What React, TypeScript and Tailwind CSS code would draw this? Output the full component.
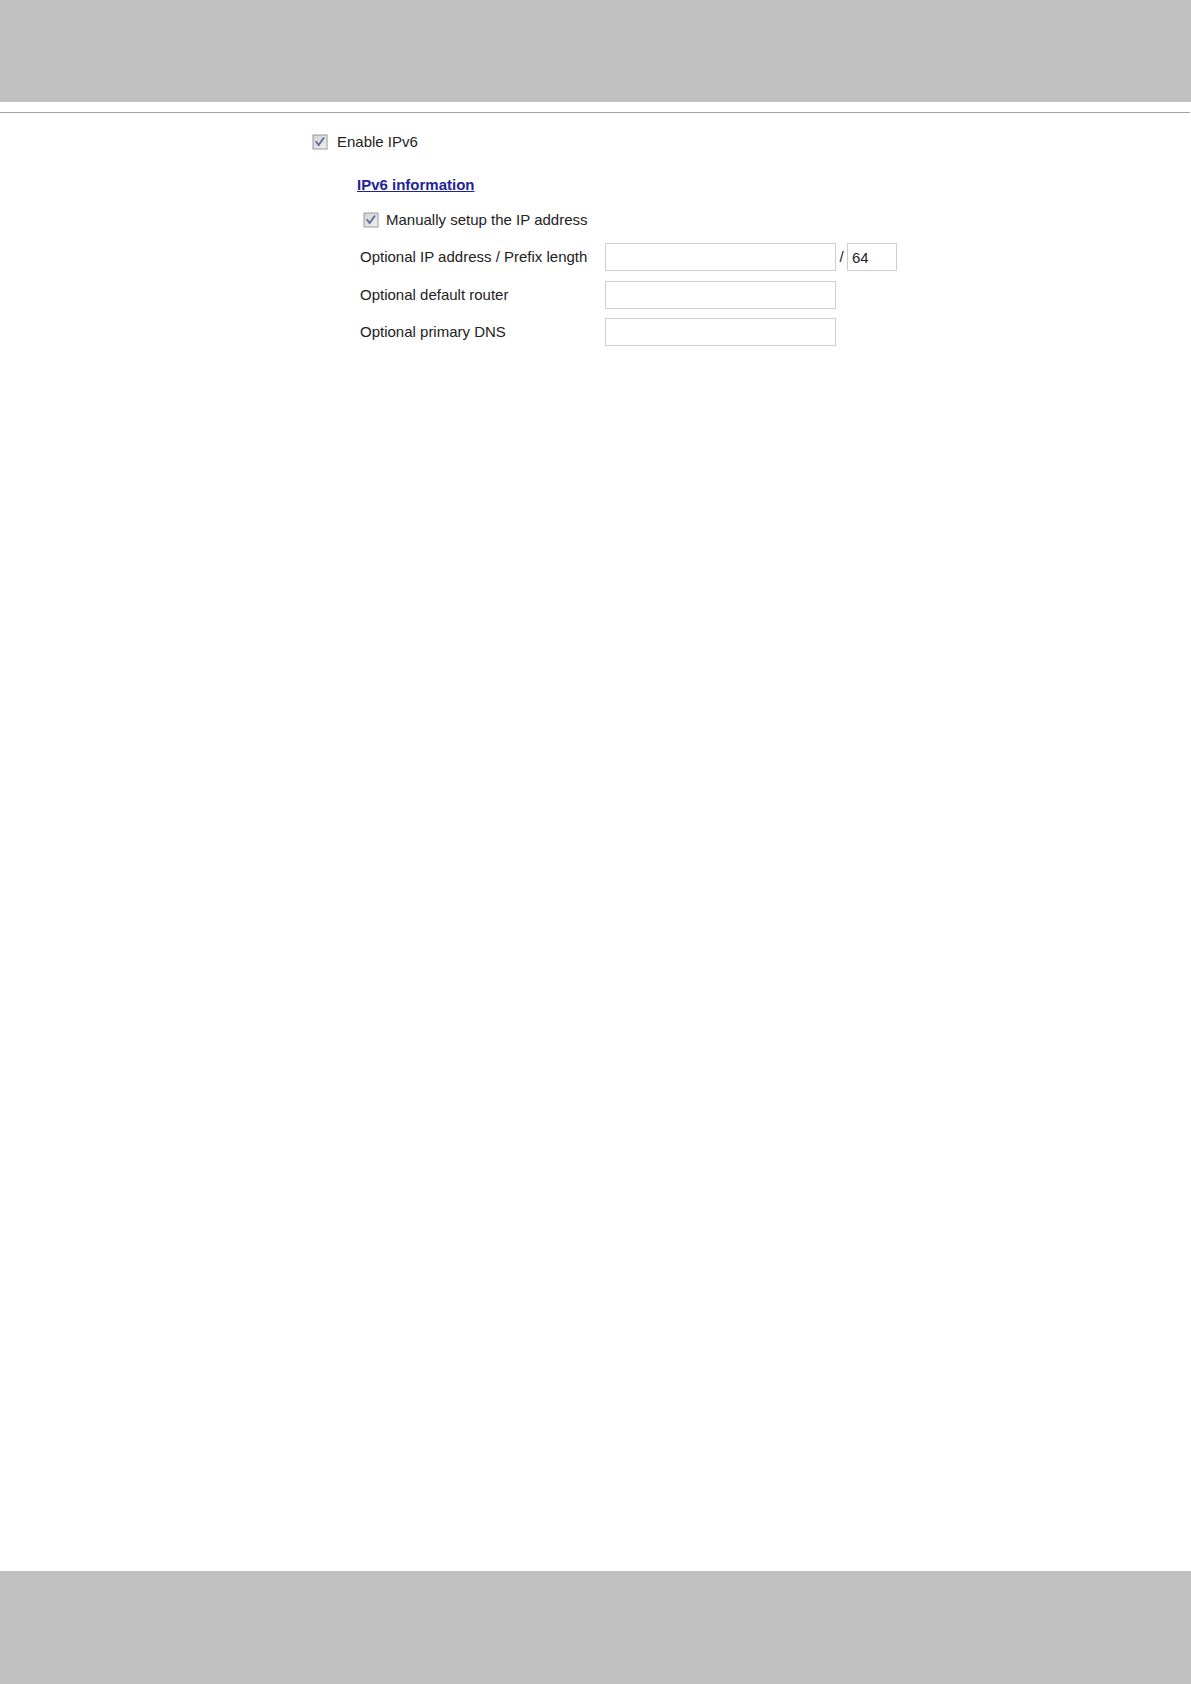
import React from "react";

/**
 * IPv6 settings block from a camera's network page.
 * Grey header / footer bands with a thin rule under the header.
 */

function CheckBox() {
  return (
    <svg width="16" height="16" viewBox="0 0 16 16" className="shrink-0">
      <defs>
        <linearGradient id="cbfill" x1="0" y1="0" x2="1" y2="1">
          <stop offset="0" stopColor="#d2d2d2" />
          <stop offset="1" stopColor="#f0f0f0" />
        </linearGradient>
      </defs>
      <rect x="0.5" y="0.5" width="15" height="15" fill="#9a9a9a" />
      <rect x="1.5" y="1.5" width="13" height="13" fill="url(#cbfill)" />
      <path
        d="M4.3 8 L6.7 11 L11.5 4.2"
        fill="none"
        stroke="#5a6aa0"
        strokeWidth="1.8"
        strokeLinecap="square"
      />
    </svg>
  );
}

function TextInput({ value = "", width }: { value?: string; width: string }) {
  return (
    <input
      type="text"
      defaultValue={value}
      className={
        "h-[28px] border border-[#cdcdcd] bg-white px-[4px] text-[15px] text-[#222] outline-none " +
        width
      }
    />
  );
}

const ROWS = [
  { label: "Optional IP address / Prefix length", prefix: true },
  { label: "Optional default router", prefix: false },
  { label: "Optional primary DNS", prefix: false },
];

export default function App() {
  return (
    <div
      className="flex min-h-[1684px] w-[1191px] flex-col bg-white text-[15px] text-[#222]"
      style={{ fontFamily: '"Liberation Sans", Arial, sans-serif' }}
    >
      <div className="h-[102px] bg-[#c0c0c0]" />
      <div className="mt-[10px] h-[1px] w-[1190px] bg-[#a3a3a3]" />

      <div className="flex flex-1 flex-col pl-[312px]">
        <label className="mt-[20px] flex h-[18px] items-center gap-[9px] leading-[18px]">
          <CheckBox />
          <span>Enable IPv6</span>
        </label>

        <div className="mt-[25px] pl-[45px] leading-[18px]">
          <a href="#" className="font-bold text-[#22229a] underline">
            IPv6 information
          </a>
        </div>

        <label className="mt-[17px] flex h-[18px] items-center gap-[7px] pl-[51px] leading-[18px]">
          <CheckBox />
          <span>Manually setup the IP address</span>
        </label>

        <div className="mt-[14px] flex flex-col gap-[9.5px] pl-[48px]">
          {ROWS.map((r) => (
            <div key={r.label} className="flex h-[28px] items-center">
              <span className="w-[245px] leading-[18px]">{r.label}</span>
              <TextInput width="w-[231px]" />
              {r.prefix && (
                <>
                  <span className="w-[11px] text-center">/</span>
                  <TextInput width="w-[50px]" value="64" />
                </>
              )}
            </div>
          ))}
        </div>
      </div>

      <div className="h-[113px] bg-[#c0c0c0]" />
    </div>
  );
}
